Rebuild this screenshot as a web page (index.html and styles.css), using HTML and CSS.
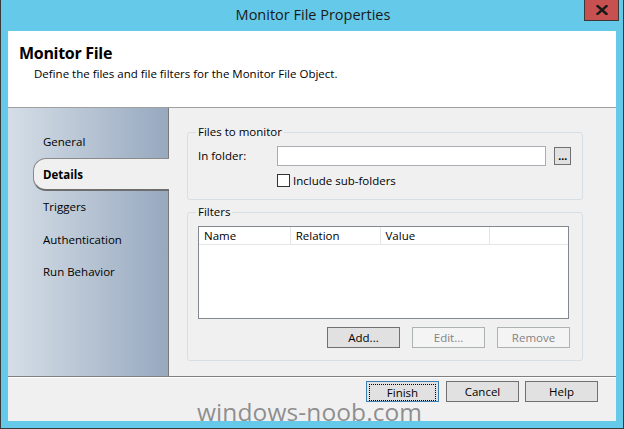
FILE: index.html
```html
<!DOCTYPE html>
<html>
<head>
<meta charset="utf-8">
<link rel="stylesheet" href="styles.css">
</head>
<body>
<div class="window">
  <div class="titlebar">
    <span></span>
    <span class="title">Monitor File Properties</span>
    <button class="close" aria-label="Close">
      <svg width="12" height="10" viewBox="0 0 12 10"><path d="M1.5 1 L10.5 9 M10.5 1 L1.5 9" stroke="#1a1a1a" stroke-width="2.4" stroke-linecap="square"/></svg>
    </button>
  </div>
  <div class="client">
    <div class="header">
      <div class="h-title">Monitor File</div>
      <div class="h-sub">Define the files and file filters for the Monitor File Object.</div>
    </div>
    <div class="body">
      <nav class="nav">
        <div class="nav-item">General</div>
        <div class="nav-item active">Details</div>
        <div class="nav-item short">Triggers</div>
        <div class="nav-item">Authentication</div>
        <div class="nav-item short">Run Behavior</div>
      </nav>
      <div class="content">
        <fieldset class="group g1">
          <legend>Files to monitor</legend>
          <div class="row">
            <label class="lbl">In folder:</label>
            <div class="textbox"></div>
            <div class="ellipsis">...</div>
          </div>
          <div class="checkrow">
            <span class="checkbox"></span>
            <span>Include sub-folders</span>
          </div>
        </fieldset>
        <fieldset class="group g2">
          <legend>Filters</legend>
          <div class="list">
            <div class="list-head">
              <div class="col c1">Name</div>
              <div class="col c2">Relation</div>
              <div class="col c3">Value</div>
              <div class="col c4"></div>
            </div>
          </div>
          <div class="btnrow">
            <div class="btn">Add...</div>
            <div class="btn disabled">Edit...</div>
            <div class="btn disabled">Remove</div>
          </div>
        </fieldset>
      </div>
    </div>
    <div class="footer">
      <div class="btn focus"><span class="focusring">Finish</span></div>
      <div class="btn">Cancel</div>
      <div class="btn help">Help</div>
    </div>
  </div>
  <div class="watermark">windows-noob.com</div>
</div>
</body>
</html>
```

FILE: styles.css
```css
* { box-sizing: border-box; }
html, body { margin: 0; padding: 0; }
body {
  width: 624px;
  height: 429px;
  overflow: hidden;
  font-family: "Open Sans", "Noto Sans", sans-serif;
  font-size: 11.5px;
  color: #000;
}
.window {
  position: relative;
  width: 624px;
  height: 429px;
  background: #65c9e9;
  border-left: 1px solid #3a3a3a;
  border-right: 1px solid #3a3a3a;
  border-bottom: 1px solid #3a3a3a;
  display: flex;
  flex-direction: column;
}
.titlebar {
  height: 31px;
  flex: none;
  display: grid;
  grid-template-columns: 1fr auto 1fr;
  align-items: start;
}
.title {
  font-size: 14.5px;
  line-height: 30px;
  color: #1a1a1a;
  padding-left: 2px;
}
.close {
  justify-self: end;
  margin-right: 4px;
  width: 35px;
  height: 21px;
  padding: 0;
  background: #c75050;
  border: 1px solid #3a3a3a;
  border-top: none;
  display: flex;
  align-items: center;
  justify-content: center;
}
.client {
  margin: 0 7px 7px 7px;
  height: 390px;
  flex: none;
  display: flex;
  flex-direction: column;
  background: #f0f0f0;
}
.header {
  height: 77px;
  flex: none;
  background: #fff;
  border-bottom: 1px solid #a0a0a0;
  padding: 12px 0 0 11px;
}
.h-title {
  font-weight: bold;
  font-size: 16px;
  line-height: 20px;
  letter-spacing: -0.3px;
}
.h-sub {
  margin-top: 3px;
  padding-left: 15px;
  line-height: 16px;
}
.body {
  height: 269px;
  flex: none;
  display: flex;
  border-bottom: 1px solid #7f7f7f;
}
.nav {
  width: 161px;
  background: linear-gradient(to right, #d5dee7, #97a9bf);
  border-right: 1px solid #7a7a7a;
  padding-top: 17px;
}
.nav-item {
  height: 33px;
  line-height: 33px;
  padding-left: 35px;
}
.nav-item.short {
  height: 32px;
  line-height: 31px;
}
.nav-item.active {
  margin-left: 25px;
  margin-right: -1px;
  padding-left: 9px;
  font-weight: bold;
  background: #f0f0f0;
  border: 1px solid #8a8a8a;
  border-right: none;
  border-bottom: 2px solid #6e6e6e;
  border-radius: 13px 0 0 13px;
  line-height: 31px;
}
.content {
  flex: 1;
  padding: 16px 33px 0 18px;
  display: flex;
  flex-direction: column;
  gap: 4px;
}
.group {
  margin: 0;
  border: 1px solid #d5dfe5;
  border-radius: 3px;
  padding: 0 11px 0 10px;
  min-width: 0;
}
.group legend {
  padding: 0 2px;
  margin-left: -2px;
  line-height: 16px;
}
.g1 { height: 76px; padding-top: 6px; }
.row {
  display: flex;
  align-items: center;
  height: 19px;
}
.lbl { width: 79px; }
.textbox {
  width: 269px;
  height: 20px;
  background: #fff;
  border: 1px solid #abadb3;
}
.ellipsis {
  width: 17px;
  height: 18px;
  margin-left: 8px;
  background: #e1e1e1;
  border: 1px solid #707070;
  font-family: "DejaVu Sans", sans-serif;
  font-size: 9px;
  font-weight: bold;
  line-height: 18px;
  text-align: center;
  letter-spacing: -0.5px;
}
.checkrow {
  margin-top: 8px;
  margin-left: 79px;
  height: 14px;
  display: flex;
  align-items: center;
  gap: 3px;
}
.checkbox {
  width: 13px;
  height: 13px;
  background: #fff;
  border: 1px solid #333;
}
.g2 { height: 157px; padding-top: 6px; padding-right: 12px; }
.list {
  height: 93px;
  width: 371px;
  background: #fff;
  border: 1px solid #828790;
}
.list-head {
  display: flex;
  height: 18px;
  border-bottom: 1px solid #e5e5e5;
}
.col {
  line-height: 18px;
  padding-left: 5px;
  border-right: 1px solid #e5e5e5;
}
.c1 { width: 92px; }
.c2 { width: 90px; }
.c3 { width: 110px; }
.c4 { width: 78px; border-right: none; }
.btnrow {
  margin-top: 8px;
  display: flex;
  justify-content: flex-end;
  gap: 12px;
}
.btn {
  width: 73px;
  height: 21px;
  background: #e1e1e1;
  border: 1px solid #707070;
  text-align: center;
  line-height: 19px;
}
.btn.disabled {
  background: #f4f4f4;
  border-color: #adb2b5;
  color: #838383;
}
.footer {
  height: 44px;
  flex: none;
  border-top: 1px solid #fff;
  display: flex;
  justify-content: flex-end;
  align-items: flex-start;
  padding: 3px 18px 0 0;
  gap: 7px;
}
.btn.help { margin-left: -1px; }
.btn.focus {
  border-color: #3c7fb1;
  padding: 2px;
  line-height: 15px;
}
.focusring {
  display: block;
  height: 17px;
  border: 1px dotted #000;
}
.watermark {
  position: absolute;
  left: 196px;
  top: 396px;
  font-size: 24.5px;
  line-height: 32px;
  color: rgba(125, 125, 125, 0.85);
  letter-spacing: 0.1px;
}
```
